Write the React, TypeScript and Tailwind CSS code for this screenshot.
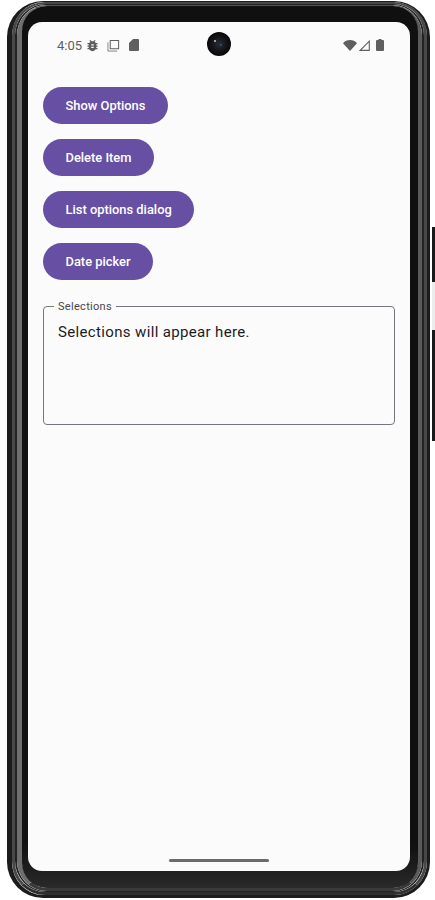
const buttons = ['Show Options', 'Delete Item', 'List options dialog', 'Date picker']

function StatusBar() {
  return (
    <div className="flex h-[45px] items-center justify-between pl-[29px] pr-[26px] pt-[1px] text-[#5f5f5f]">
      <div className="flex items-center">
        <span className="w-[27px] text-[13px] leading-none">4:05</span>
        {/* debug bug */}
        <svg viewBox="0 0 24 24" className="ml-[1px] h-[15px] w-[15px] fill-current">
          <path d="M20 8h-2.81c-.45-.78-1.07-1.45-1.82-1.96L17 4.41 15.59 3l-2.17 2.17C12.96 5.06 12.49 5 12 5s-.96.06-1.41.17L8.41 3 7 4.41l1.62 1.63C7.88 6.55 7.26 7.22 6.81 8H4v2h2.09c-.05.33-.09.66-.09 1v1H4v2h2v1c0 .34.04.67.09 1H4v2h2.81c1.04 1.79 2.97 3 5.19 3s4.15-1.21 5.19-3H20v-2h-2.09c.05-.33.09-.66.09-1v-1h2v-2h-2v-1c0-.34-.04-.67-.09-1H20V8zm-6 8h-4v-2h4v2zm0-4h-4v-2h4v2z" />
        </svg>
        {/* screenshot / copy */}
        <svg viewBox="0 0 14 14" className="ml-[7px] h-[13px] w-[13px] fill-none stroke-current">
          <path d="M3.5 1.5h9v9h-9z" strokeWidth="1.1" />
          <path d="M1 3.5v9.5h10" strokeWidth="0.8" />
        </svg>
        {/* sd card */}
        <svg viewBox="0 0 10 12" className="ml-[9px] h-[12px] w-[10px] fill-current">
          <path d="M4 0h5a1 1 0 0 1 1 1v10a1 1 0 0 1-1 1H1a1 1 0 0 1-1-1V4z" />
        </svg>
      </div>
      <div className="flex items-center">
        {/* wifi */}
        <svg viewBox="0 0 14 11" className="h-[11px] w-[14px] fill-current">
          <path d="M7 11 0 3.2C1.8 1.2 4.2 0 7 0s5.2 1.2 7 3.2z" />
        </svg>
        {/* signal */}
        <svg viewBox="0 0 11 11" className="ml-[2px] h-[11px] w-[11px] fill-none stroke-current">
          <path d="M10.3 1.2v9.2H1.2z" strokeWidth="1.1" />
        </svg>
        {/* battery */}
        <svg viewBox="0 0 8 12" className="ml-[6px] h-[12px] w-[8px] fill-current">
          <path d="M2.5 0h3v1H7a1 1 0 0 1 1 1v9a1 1 0 0 1-1 1H1a1 1 0 0 1-1-1V2a1 1 0 0 1 1-1h1.5z" />
        </svg>
      </div>
    </div>
  )
}

export default function App() {
  return (
    <div className="relative h-[900px] w-[435px] overflow-hidden bg-white pl-[7px] pt-[1px] font-['Roboto',sans-serif]">
      {/* side buttons */}
      <div className="absolute left-[432px] top-[227px] h-[55px] w-[3px] bg-[#1a1a1a]"></div>
      <div className="absolute left-[432px] top-[282px] h-[48px] w-[3px] bg-[#ececec]"></div>
      <div className="absolute left-[432px] top-[330px] h-[111px] w-[3px] bg-[#1a1a1a]"></div>

      {/* phone frame, layered rims */}
      <div className="h-[897px] w-[423px] rounded-[36px] border-t-[1px] border-r-[3px] border-b-[3px] border-l-[5px] border-[#1c1c1c]">
        <div className="h-full w-full rounded-[33px] border-t-[2px] border-r-[3px] border-b-[3px] border-l-[3px] border-t-[#484848] border-r-[#484848] border-b-[#2e2e2e] border-l-[#484848]">
          <div className="h-full w-full rounded-[31px] border-t-[1px] border-r-[2px] border-b-[1px] border-l-[2px] border-[#222222]">
            <div className="h-full w-full rounded-[30px] border-t-[1px] border-r-[4px] border-b-[3px] border-l-[5px] border-t-[#555555] border-r-[#5a5a5a] border-b-[#3a3a3a] border-l-[#6e6e6e]">
              <div className="h-full w-full rounded-[25px] bg-gradient-to-b from-[#101010] from-95% to-[#2a2a2a] pt-[16px] pr-[8px] pb-[17px] pl-[6px]">
                {/* screen */}
                <div className="relative flex h-[849px] w-[382px] flex-col overflow-hidden rounded-[14px] bg-[#fbfbfb]">
                  <StatusBar />

                  {/* camera */}
                  <div className="absolute left-[179px] top-[10px] h-[24px] w-[24px] rounded-full bg-[radial-gradient(circle_at_50%_50%,#2a2e36_0%,#15161a_40%,#050505_75%)]">
                    <div className="absolute left-[7px] top-[8px] h-[2px] w-[2px] rounded-full bg-[#c8ccd0]"></div>
                    <div className="absolute left-[13px] top-[12px] h-[2px] w-[2px] rounded-full bg-[#2b5a88]"></div>
                  </div>

                  <div className="flex flex-col items-start gap-[15px] px-[15px] pt-[20px]">
                    {buttons.map((label) => (
                      <button
                        key={label}
                        className="flex h-[37px] items-center rounded-full bg-[#6750a4] px-[22.5px] text-[12.9px] font-[480] text-white"
                      >
                        {label}
                      </button>
                    ))}
                  </div>

                  <fieldset className="mx-[15px] mt-[20px] h-[125px] rounded-[4px] border border-[#79747e] pl-[10px] pr-[10px]">
                    <legend className="px-[4px] text-[11px] leading-[13px] tracking-[0.3px] text-[#49454f]">Selections</legend>
                    <p className="mt-[9px] pl-[4px] text-[15px] leading-[20px] tracking-[0.35px] text-[#1c1b1f]">
                      Selections will appear here.
                    </p>
                  </fieldset>

                  {/* gesture bar */}
                  <div className="mt-auto mb-[9px] h-[3px] w-[100px] self-center rounded-full bg-[#6b6b6b]"></div>
                </div>
              </div>
            </div>
          </div>
        </div>
      </div>
    </div>
  )
}
